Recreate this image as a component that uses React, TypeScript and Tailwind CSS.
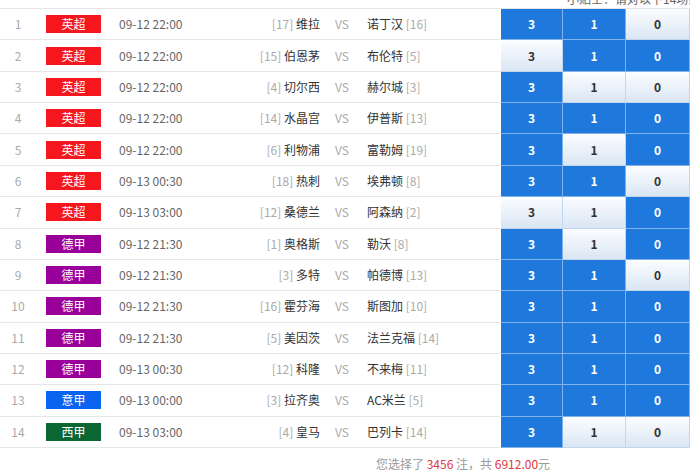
const leagueColors: Record<string, string> = {
  英超: "bg-[#f5161e]",
  德甲: "bg-[#990099]",
  意甲: "bg-[#0a64f0]",
  西甲: "bg-[#0a6632]",
};

type Match = {
  league: string;
  time: string;
  homeRank: number;
  home: string;
  away: string;
  awayRank: number;
  picks: [boolean, boolean, boolean];
};

const matches: Match[] = [
  { league: "英超", time: "09-12 22:00", homeRank: 17, home: "维拉", away: "诺丁汉", awayRank: 16, picks: [true, true, false] },
  { league: "英超", time: "09-12 22:00", homeRank: 15, home: "伯恩茅", away: "布伦特", awayRank: 5, picks: [false, true, true] },
  { league: "英超", time: "09-12 22:00", homeRank: 4, home: "切尔西", away: "赫尔城", awayRank: 3, picks: [true, false, false] },
  { league: "英超", time: "09-12 22:00", homeRank: 14, home: "水晶宫", away: "伊普斯", awayRank: 13, picks: [true, true, true] },
  { league: "英超", time: "09-12 22:00", homeRank: 6, home: "利物浦", away: "富勒姆", awayRank: 19, picks: [true, false, true] },
  { league: "英超", time: "09-13 00:30", homeRank: 18, home: "热刺", away: "埃弗顿", awayRank: 8, picks: [true, true, false] },
  { league: "英超", time: "09-13 03:00", homeRank: 12, home: "桑德兰", away: "阿森纳", awayRank: 2, picks: [false, false, true] },
  { league: "德甲", time: "09-12 21:30", homeRank: 1, home: "奥格斯", away: "勒沃", awayRank: 8, picks: [true, false, true] },
  { league: "德甲", time: "09-12 21:30", homeRank: 3, home: "多特", away: "帕德博", awayRank: 13, picks: [true, true, false] },
  { league: "德甲", time: "09-12 21:30", homeRank: 16, home: "霍芬海", away: "斯图加", awayRank: 10, picks: [true, true, true] },
  { league: "德甲", time: "09-12 21:30", homeRank: 5, home: "美因茨", away: "法兰克福", awayRank: 14, picks: [true, true, true] },
  { league: "德甲", time: "09-13 00:30", homeRank: 12, home: "科隆", away: "不来梅", awayRank: 11, picks: [true, true, true] },
  { league: "意甲", time: "09-13 00:00", homeRank: 3, home: "拉齐奥", away: "AC米兰", awayRank: 5, picks: [true, true, true] },
  { league: "西甲", time: "09-13 03:00", homeRank: 4, home: "皇马", away: "巴列卡", awayRank: 14, picks: [true, false, false] },
];

const cellWidths = ["w-[62px]", "w-[63px]", "w-[64px]"];
const labels = ["3", "1", "0"];

function PickCell({ on, label, width }: { on: boolean; label: string; width: string }) {
  return (
    <div
      className={
        width +
        " h-full flex items-center justify-center font-bold border-r border-b " +
        (on
          ? "bg-[#1f78dc] text-white border-[#7fb2ea]"
          : "bg-gradient-to-b from-[#fbfdff] to-[#dae6f4] text-[#333] border-[#c4d6ec]")
      }
    >
      {label}
    </div>
  );
}

function Row({ m, i }: { m: Match; i: number }) {
  return (
    <div className="flex h-[31.36px] items-stretch">
      <div className="flex w-[501px] items-center border-b border-[#e6e6e6]">
        <div className="w-[36px] text-center text-[#aaa]">{i + 1}</div>
        <div
          className={
            leagueColors[m.league] +
            " ml-[10px] flex h-[18px] w-[55px] items-center justify-center text-white"
          }
        >
          {m.league}
        </div>
        <div className="ml-[18px] w-[100px] text-[#666]">{m.time}</div>
        <div className="w-[101px] text-right text-[#333]">
          <span className="text-[#aaa]">[{m.homeRank}]</span> {m.home}
        </div>
        <div className="w-[44px] text-center text-[#aaa]">VS</div>
        <div className="pl-[3px] text-[#333]">
          {m.away} <span className="text-[#aaa]">[{m.awayRank}]</span>
        </div>
      </div>
      {m.picks.map((on, k) => (
        <PickCell key={k} on={on} label={labels[k]} width={cellWidths[k]} />
      ))}
    </div>
  );
}

export default function App() {
  return (
    <div
      className="w-[690px] h-[473px] overflow-hidden bg-white text-[12px]"
      style={{ fontFamily: '"Noto Sans CJK SC", "Noto Sans", sans-serif' }}
    >
      <div className="flex h-[8px] items-end overflow-hidden pl-[567px]">
        <span className="mb-[2px] whitespace-nowrap leading-[14px] text-[#666]">
          小贴士：请对以下14场比赛进行选择
        </span>
      </div>
      <div className="border-t border-[#e6e6e6]">
        {matches.map((m, i) => (
          <Row key={i} m={m} i={i} />
        ))}
      </div>
      <div className="pl-[376px] pt-[8px] leading-[16px] text-[#999]">
        您选择了 <span className="text-[#e0383e]">3456</span> 注，共{" "}
        <span className="text-[#e0383e]">6912.00</span>元
      </div>
    </div>
  );
}
